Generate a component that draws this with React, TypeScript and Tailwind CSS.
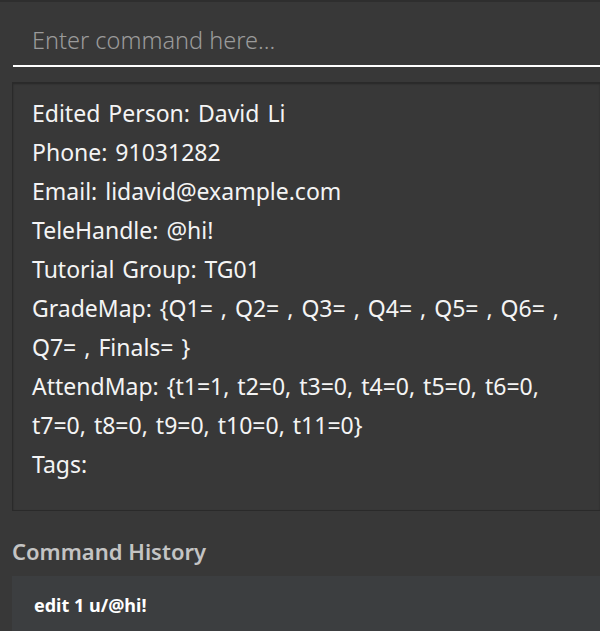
export default function App() {
  const lines = [
    "Edited Person: David Li",
    "Phone: 91031282",
    "Email: lidavid@example.com",
    "TeleHandle: @hi!",
    "Tutorial Group: TG01",
    "GradeMap: {Q1= , Q2= , Q3= , Q4= , Q5= , Q6= , Q7= , Finals= }",
    "AttendMap: {t1=1, t2=0, t3=0, t4=0, t5=0, t6=0, t7=0, t8=0, t9=0, t10=0, t11=0}",
    "Tags:",
  ];

  return (
    <div className="w-[600px] h-[631px] overflow-hidden bg-[#383838] border-t-2 border-[#2e2e2e] font-['Segoe_UI','Noto_Sans',sans-serif] flex flex-col">
      <div className="pl-[13px] pt-[14px]">
        <div className="h-[51px] border-b-2 border-white flex items-center pl-[19px]">
          <span className="text-[23.5px] font-light text-[#9b9b9b]">Enter command here...</span>
        </div>
      </div>

      <div className="ml-[12px] mt-[15px] h-[429px] border border-[#2a2a2a] border-r-0 bg-[#383838] shadow-[inset_0_1px_2px_rgba(0,0,0,0.3)] pl-[19px] pr-[40px] pt-[11px]">
        {lines.map((l) => (
          <p key={l} className="text-[23px] leading-[39px] text-[#f4f4f4] [word-spacing:2px]">
            {l}
          </p>
        ))}
      </div>

      <div className="pl-[12px] pt-[26px] pb-[11px]">
        <h2 className="text-[22px] leading-[28px] font-semibold text-[#c4c4c4]">Command History</h2>
      </div>

      <div className="ml-[12px] flex-1 bg-[#3c3e40] pl-[22px] pt-[16px]">
        <p className="text-[18px] font-bold text-white">edit 1 u/@hi!</p>
      </div>
    </div>
  );
}
